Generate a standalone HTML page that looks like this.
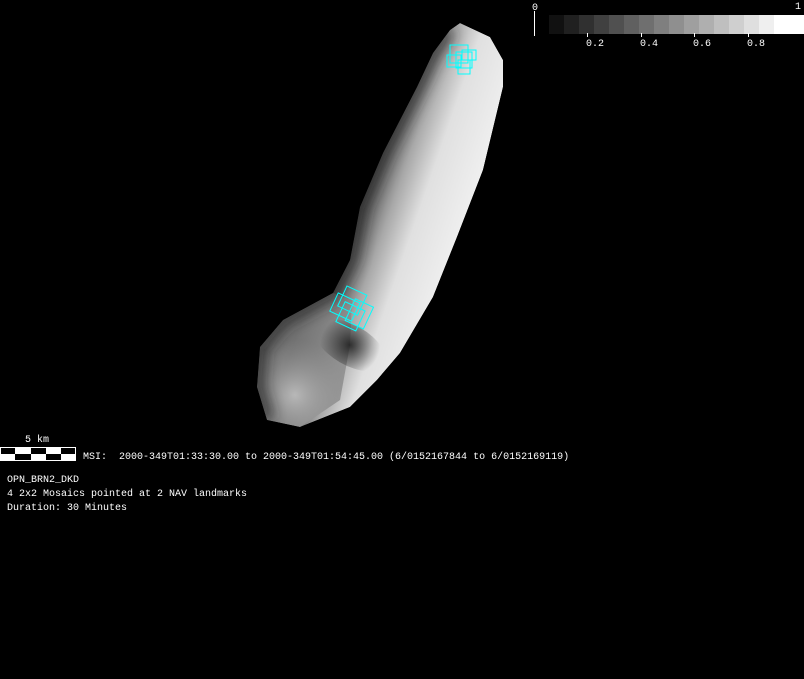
<!DOCTYPE html>
<html><head><meta charset="utf-8"><style>
html,body{margin:0;padding:0;background:#000;width:804px;height:679px;overflow:hidden;position:relative}
.t{position:absolute;color:#fff;font-family:"Liberation Mono","DejaVu Sans Mono",monospace;font-size:10px;line-height:13px;white-space:pre}
</style></head><body>
<svg width="804" height="679" style="position:absolute;left:0;top:0">
<defs>
<linearGradient id="g" gradientUnits="userSpaceOnUse" x1="350" y1="180" x2="480" y2="225">
<stop offset="0" stop-color="#1a1a1a"/><stop offset="0.15" stop-color="#555"/><stop offset="0.35" stop-color="#a8a8a8"/><stop offset="0.55" stop-color="#e0e0e0"/><stop offset="1" stop-color="#f4f4f4"/>
</linearGradient>
<radialGradient id="d" cx="350" cy="345" r="30" gradientUnits="userSpaceOnUse">
<stop offset="0" stop-color="#181818" stop-opacity="0.85"/><stop offset="1" stop-color="#181818" stop-opacity="0"/>
</radialGradient>
<radialGradient id="l" cx="295" cy="395" r="55" gradientUnits="userSpaceOnUse">
<stop offset="0" stop-color="#b8b8b8"/><stop offset="1" stop-color="#909090" stop-opacity="0"/>
</radialGradient>
<filter id="b" x="-20%" y="-20%" width="140%" height="140%"><feGaussianBlur stdDeviation="7"/></filter>
<clipPath id="c"><path id="shape" d="M460 23 L490 37 L503 60 L503 87 L483 170 L457 237 L433 297 L400 353 L377 380 L350 407 L300 427 L267 420 L257 387 L260 347 L283 320 L333 293 L350 260 L360 207 L383 153 L417 87 L433 53 L450 30 Z"/></clipPath>
</defs>
<g clip-path="url(#c)">
<path d="M460 23 L490 37 L503 60 L503 87 L483 170 L457 237 L433 297 L400 353 L377 380 L350 407 L300 427 L267 420 L257 387 L260 347 L283 320 L333 293 L350 260 L360 207 L383 153 L417 87 L433 53 L450 30 Z" fill="url(#g)"/>
<path d="M267 420 L257 387 L260 347 L283 320 L333 293 L352 300 L350 345 L340 400 L300 427 Z" fill="#8a8a8a" opacity="0.8"/>
<path d="M267 420 L257 387 L260 347 L283 320 L333 293 L352 300 L350 345 L340 400 L300 427 Z" fill="url(#l)"/>
<ellipse cx="350" cy="345" rx="40" ry="20" fill="url(#d)" transform="rotate(30 350 345)"/>
<path d="M450 30 L433 53 L417 87 L383 153 L360 207 L350 260 L333 293 L283 320 L260 347 L257 387 L267 420" fill="none" stroke="#222" stroke-width="14" filter="url(#b)" opacity="0.8"/>
</g>
<g fill="none" stroke="#00ffff" stroke-width="1">
<rect x="450" y="45" width="18" height="18"/><rect x="456" y="52" width="16" height="16"/><rect x="447" y="55" width="14" height="12"/><rect x="462" y="50" width="14" height="10"/><rect x="458" y="60" width="12" height="14"/>
<g transform="rotate(25 350 315)"><rect x="335" y="290" width="22" height="22"/><rect x="340" y="305" width="22" height="22"/><rect x="330" y="300" width="24" height="20"/><rect x="348" y="298" width="20" height="24"/></g>
</g>
<g>
<rect x="549" y="15" width="15" height="19" fill="#111"/><rect x="564" y="15" width="15" height="19" fill="#202020"/><rect x="579" y="15" width="15" height="19" fill="#303030"/><rect x="594" y="15" width="15" height="19" fill="#404040"/><rect x="609" y="15" width="15" height="19" fill="#505050"/><rect x="624" y="15" width="15" height="19" fill="#606060"/><rect x="639" y="15" width="15" height="19" fill="#6f6f6f"/><rect x="654" y="15" width="15" height="19" fill="#7f7f7f"/><rect x="669" y="15" width="15" height="19" fill="#8f8f8f"/><rect x="684" y="15" width="15" height="19" fill="#9f9f9f"/><rect x="699" y="15" width="15" height="19" fill="#afafaf"/><rect x="714" y="15" width="15" height="19" fill="#bfbfbf"/><rect x="729" y="15" width="15" height="19" fill="#cfcfcf"/><rect x="744" y="15" width="15" height="19" fill="#dfdfdf"/><rect x="759" y="15" width="15" height="19" fill="#efefef"/><rect x="774" y="15" width="30" height="19" fill="#fff"/>
<line x1="534.5" y1="11" x2="534.5" y2="36" stroke="#fff"/>
<line x1="587.5" y1="33" x2="587.5" y2="37" stroke="#fff"/><line x1="641.5" y1="33" x2="641.5" y2="37" stroke="#fff"/><line x1="694.5" y1="33" x2="694.5" y2="37" stroke="#fff"/><line x1="748.5" y1="33" x2="748.5" y2="37" stroke="#fff"/>
</g>
<rect x="0" y="447" width="76" height="14" fill="#fff"/>
<rect x="1" y="448" width="14" height="6" fill="#000"/><rect x="31" y="448" width="15" height="6" fill="#000"/><rect x="61" y="448" width="14" height="6" fill="#000"/>
<rect x="15" y="454" width="16" height="6" fill="#000"/><rect x="46" y="454" width="15" height="6" fill="#000"/>
</svg>
<div class="t" style="left:532px;top:2px">0</div>
<div class="t" style="left:795px;top:1px">1</div>
<div class="t" style="left:586px;top:38px">0.2</div>
<div class="t" style="left:640px;top:38px">0.4</div>
<div class="t" style="left:693px;top:38px">0.6</div>
<div class="t" style="left:747px;top:38px">0.8</div>
<div class="t" style="left:25px;top:434px">5 km</div>
<div class="t" style="left:83px;top:451px">MSI:  2000-349T01:33:30.00 to 2000-349T01:54:45.00 (6/0152167844 to 6/0152169119)</div>
<div class="t" style="left:7px;top:474px">OPN_BRN2_DKD</div>
<div class="t" style="left:7px;top:488px">4 2x2 Mosaics pointed at 2 NAV landmarks</div>
<div class="t" style="left:7px;top:502px">Duration: 30 Minutes</div>
</body></html>
